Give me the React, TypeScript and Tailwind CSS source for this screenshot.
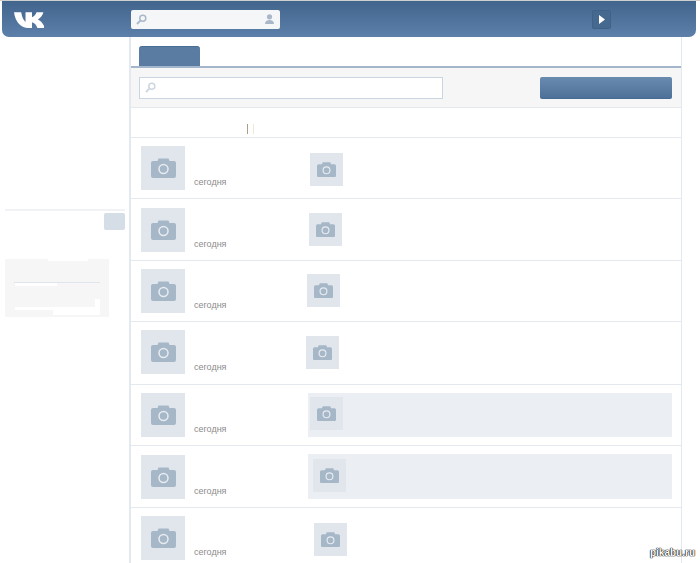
function Camera({ size }: { size: number }) {
  return (
    <svg width={size} height={size * 0.8} viewBox="0 0 25 20" className="block">
      <path d="M2 3h4.500l1-2.600h10l1 2.600H23a2 2 0 0 1 2 2v13a2 2 0 0 1-2 2H2a2 2 0 0 1-2-2V5a2 2 0 0 1 2-2z" fill="#a6b7c8" />
      <circle cx="12.5" cy="11" r="4.500" fill="none" stroke="#e8ecf1" strokeWidth="1.500" />
    </svg>
  );
}

function SearchIcon({ color }: { color: string }) {
  return (
    <svg width="11" height="11" viewBox="0 0 11 11" className="block">
      <circle cx="6.8" cy="4.2" r="3" fill="none" stroke={color} strokeWidth="1.5" />
      <path d="M4.6 6.4 1 10" stroke={color} strokeWidth="1.8" />
    </svg>
  );
}

function Thumb({ className }: { className: string }) {
  return (
    <div className={`w-[33px] h-[33px] bg-[#e1e6ed] flex items-center justify-center ${className}`}>
      <Camera size={19} />
    </div>
  );
}

const rows = [
  { height: "h-[61px]", photo: "mt-[8px]", date: "pt-[37px]", thumb: "ml-[125px] mt-[15px]" },
  { height: "h-[62px]", photo: "mt-[9px]", date: "pt-[38px]", thumb: "ml-[124px] mt-[14px]" },
  { height: "h-[61px]", photo: "mt-[8px]", date: "pt-[37px]", thumb: "ml-[122px] mt-[13px]" },
  { height: "h-[63px]", photo: "mt-[8px]", date: "pt-[38px]", thumb: "ml-[121px] mt-[14px]" },
];

function Row({ height, photo, date, children }: { height: string; photo: string; date: string; children: React.ReactNode }) {
  return (
    <div className={`flex shrink-0 border-b border-[#e4e8ef] ${height}`}>
      <div className={`w-[44px] h-[44px] ml-[10px] shrink-0 bg-[#e1e6ed] flex items-center justify-center ${photo}`}>
        <Camera size={25} />
      </div>
      <div className={`w-[116px] shrink-0 pl-[9px] text-[9px] leading-[14px] text-[#8c8c8c] ${date}`}>сегодня</div>
      <div className="relative grow -ml-[116px]">{children}</div>
    </div>
  );
}

export default function App() {
  return (
    <div className="relative w-[700px] h-[563px] overflow-hidden bg-white font-['Liberation_Sans',sans-serif]">
      <div className="h-[1px] bg-[#cfcfcf]" />
      <header className="ml-[2px] w-[694px] h-[36px] rounded-b-[7px] bg-gradient-to-b from-[#41658d] to-[#5c80a9] flex items-center">
        <svg width="30" height="17" viewBox="0 0 25 15" preserveAspectRatio="none" className="ml-[12px] block">
          <path d="M0 1h6c.6 4 1.800 7 3.600 8.600V1h5.400v4.600c1.600-.8 3-2.500 3.800-4.600h5.700c-.8 3-2.700 5.200-4.600 6.400 2.200 1 4.600 3.600 5.800 7.600h-6.200c-.9-2.700-2.600-4.600-4.500-5V15h-3.200C6.400 15 1 10 0 1z" fill="#fff" />
        </svg>
        <div className="ml-[87px] w-[149px] h-[19px] rounded-[2px] bg-[#f5f6f7] flex items-center px-[5px]">
          <SearchIcon color="#a9b8c9" />
          <div className="grow" />
          <svg width="9" height="10" viewBox="0 0 9 10" className="mr-[1px] block">
            <circle cx="4.500" cy="2.800" r="2.600" fill="#a9b8c9" />
            <path d="M0 10c0-3 2-4 4.500-4s4.500 1 4.500 4z" fill="#a9b8c9" />
          </svg>
        </div>
        <div className="ml-[312px] w-[19px] h-[19px] rounded-[2px] bg-[#46698f] border border-[#3f6289] flex items-center justify-center">
          <svg width="6" height="9" viewBox="0 0 6 9" className="block">
            <path d="M0 0l6 4.500L0 9z" fill="#fff" />
          </svg>
        </div>
      </header>

      <div className="flex h-[526px]">
        <aside className="w-[129px] shrink-0 pl-[5px]">
          <div className="mt-[172px] w-[120px] h-[2px] bg-[#f0f2f5]" />
          <div className="mt-[2px] ml-[99px] w-[21px] h-[17px] rounded-[2px] bg-[#d5dde6]" />
          <div className="relative mt-[29px] w-[104px] h-[58px] bg-[#f6f6f6]">
            <div className="absolute left-[43px] top-0 w-[40px] h-[2px] bg-white" />
            <div className="absolute left-[9px] top-[23px] w-[86px] h-[1px] bg-[#dfe5ec]" />
            <div className="absolute left-[10px] top-[24px] w-[42px] h-[3px] bg-white" />
            <div className="absolute left-[10px] top-[48px] w-[85px] h-[3px] bg-white" />
            <div className="absolute left-[48px] top-[51px] w-[47px] h-[5px] bg-white" />
            <div className="absolute left-[90px] top-[40px] w-[5px] h-[8px] bg-white" />
          </div>
        </aside>

        <main className="w-[553px] shrink-0 flex flex-col border-l-2 border-r border-[#e4e8ef]">
          <div className="h-[31px] shrink-0 pl-[8px] pt-[9px] border-b-2 border-[#a3b6cb]">
            <div className="w-[61px] h-[20px] rounded-t-[3px] bg-[#5a7ca3] border-t border-[#4a6d96]" />
          </div>
          <div className="h-[40px] shrink-0 bg-[#f6f6f6] border-b border-[#e4e8ef] flex items-center pl-[8px] pr-[7px]">
            <div className="w-[304px] h-[22px] bg-white border border-[#cbd5e1] flex items-center pl-[5px]">
              <SearchIcon color="#cdd6e0" />
            </div>
            <div className="ml-[97px] w-[132px] h-[22px] rounded-[2px] bg-gradient-to-b from-[#6a8bb0] to-[#4e7199] border-b border-[#466a92]" />
          </div>
          <div className="h-[30px] shrink-0 border-b border-[#e4e8ef] flex items-center pt-[12px] pl-[116px] gap-[5px]">
            <div className="w-[1px] h-[10px] bg-[#a89f86]" />
            <div className="w-[1px] h-[10px] bg-[#f0e8d4]" />
          </div>

          {rows.map((r, i) => (
            <Row key={i} height={r.height} photo={r.photo} date={r.date}>
              <Thumb className={r.thumb} />
            </Row>
          ))}
          <Row height="h-[61px]" photo="mt-[8px]" date="pt-[37px]">
            <div className="ml-[123px] mt-[8px] w-[364px] h-[44px] bg-[#ebeef3] pl-[2px] pt-[4px]">
              <Thumb className="" />
            </div>
          </Row>
          <Row height="h-[62px]" photo="mt-[9px]" date="pt-[38px]">
            <div className="ml-[123px] mt-[8px] w-[364px] h-[45px] bg-[#ebeef3] pl-[5px] pt-[5px]">
              <Thumb className="" />
            </div>
          </Row>
          <Row height="h-[56px]" photo="mt-[8px]" date="pt-[37px]">
            <Thumb className="ml-[129px] mt-[15px]" />
          </Row>
        </main>
      </div>

      <div className="absolute right-[5px] bottom-[4px] text-[10px] leading-[12px] font-bold text-white [text-shadow:0_0_1px_#000,0_0_1px_#000,0_0_1px_#000]">pikabu.ru</div>
    </div>
  );
}
